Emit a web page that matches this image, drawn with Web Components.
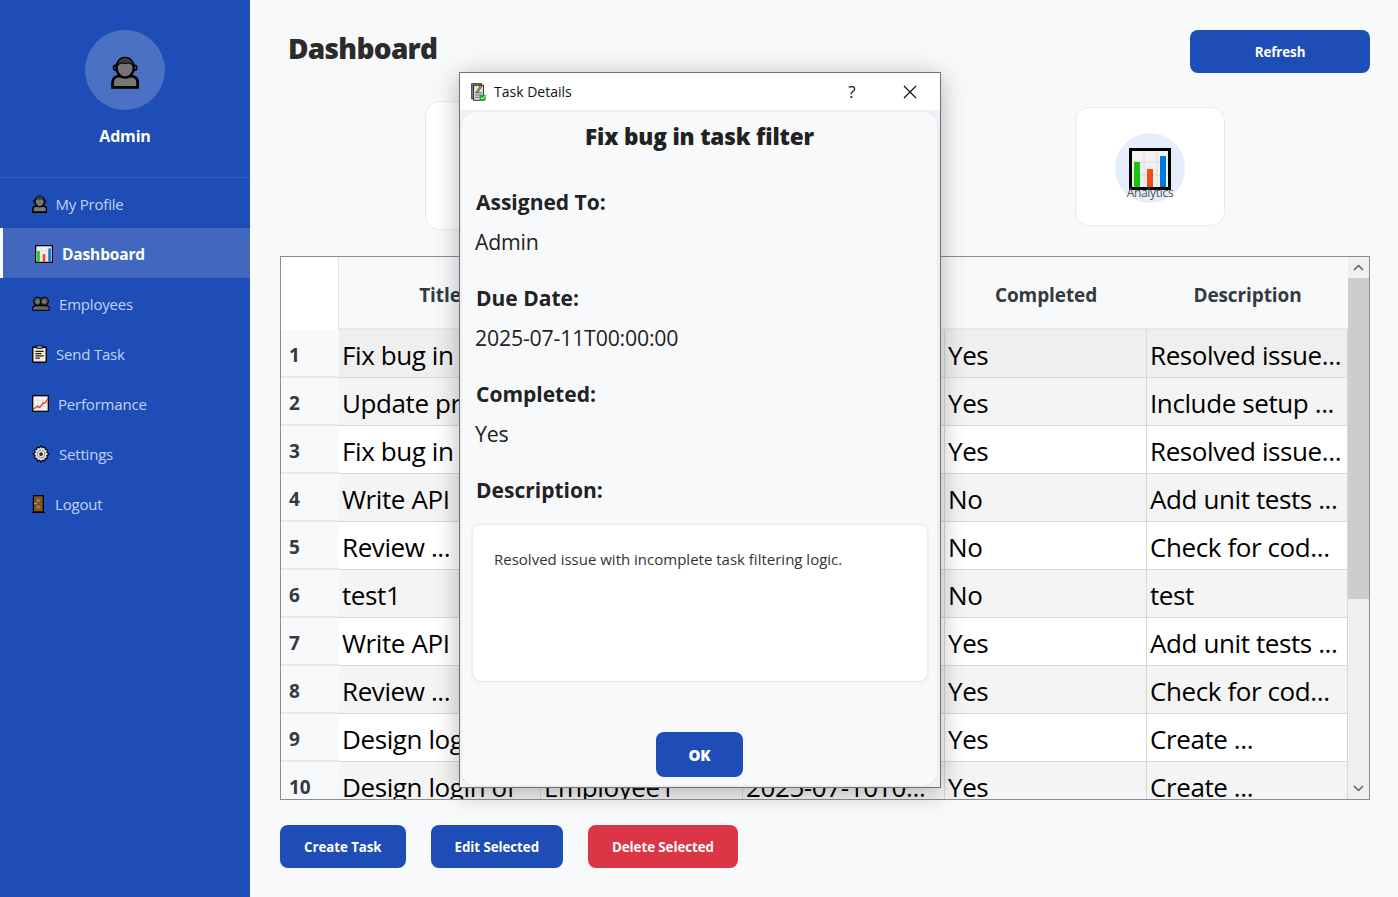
<!DOCTYPE html>
<html lang="en">
  <head>
    <meta charset="UTF-8" />
    <title>Dashboard</title>
    <style>
      html,
      body {
        margin: 0;
        height: 100%;
      }
      body {
        font-family: "Open Sans", "Noto Sans", sans-serif;
      }
    </style>
  </head>
  <body>
    <app-shell>
      <side-bar slot="side"></side-bar>

      <page-header slot="main">Dashboard</page-header>
      <stat-row slot="main"></stat-row>
      <task-table slot="main"></task-table>
      <action-bar slot="main"></action-bar>

      <task-dialog slot="over"></task-dialog>
    </app-shell>

    <script>
      // emoji style pictures: [viewBox width, viewBox height, markup]
      const ICONS = {
        person: [18, 21, `
          <path d="M1 20v-3c0-2.600 1.800-4.200 4.500-4.200h7c2.700 0 4.500 1.600 4.500 4.200v3z" fill="#777" stroke="#000" stroke-width="1.800"/>
          <ellipse cx="2.900" cy="7.500" rx="1.300" ry="1.600" fill="#666" stroke="#000"/>
          <ellipse cx="15.100" cy="7.500" rx="1.300" ry="1.600" fill="#666" stroke="#000"/>
          <ellipse cx="9" cy="7.500" rx="5.500" ry="6.300" fill="#757575" stroke="#000" stroke-width="1.500"/>
          <path d="M3.500 7C4 2.500 6.500 1 9 1s5 1.500 5.500 6C13 4.500 11 4 9 5 7 4 5 4.500 3.500 7z" fill="#3c3c3c" stroke="#000" stroke-width=".7"/>`],
        people: [24, 20, `
          <path d="M1 19v-2.500C1 14 3 12.800 6 12.800h12c3 0 5 1.200 5 3.700V19z" fill="#666" stroke="#000" stroke-width="1.500"/>
          <circle cx="7.500" cy="7" r="5.300" fill="#4a4a4a" stroke="#000" stroke-width="1.500"/>
          <circle cx="16.500" cy="7" r="5.300" fill="#4a4a4a" stroke="#000" stroke-width="1.500"/>
          <circle cx="7.500" cy="7.500" r="2.700" fill="#777"/>
          <circle cx="16.500" cy="7.500" r="2.700" fill="#777"/>`],
        task: [20, 24, `
          <rect x="1" y="3" width="18" height="20" rx="1" fill="#f3e8d2" stroke="#000" stroke-width="1.800"/>
          <rect x="6.500" y="1" width="7" height="3.500" fill="#999" stroke="#000"/>
          <path d="M4.500 8.500h11M4.500 11.500h8M4.500 14.500h11M4.500 17.500h6" stroke="#222" stroke-width="1.600"/>`],
        trend: [24, 24, `
          <rect x="1" y="1" width="22" height="22" fill="#f4f4f4" stroke="#000" stroke-width="1.800"/>
          <path d="M8 2v20M15.500 2v20M2 8h20M2 15.500h20" stroke="#d8d8d8"/>
          <path d="M2 20l5.500-4 3.500 1.500 5-6.500 2.500.5L22.500 5" fill="none" stroke="#f03a17" stroke-width="1.800"/>`],
        gear: [24, 24, `
          <path d="M12 1l1.800 2.600 3.100-1 .7 3.100 3.100.7-1 3.100L22.600 12l-2.900 2.400 1 3.100-3.100.7-.7 3.100-3.100-1L12 23l-1.800-2.700-3.100 1-.7-3.100-3.100-.7 1-3.100L1.400 12l2.900-2.400-1-3.100 3.100-.7.7-3.100 3.100 1z" fill="#dcdcdc" stroke="#000" stroke-width="1.400"/>
          <circle cx="12" cy="12" r="5" fill="#ededed" stroke="#777"/>
          <circle cx="12" cy="12" r="2.500" fill="#222"/>`],
        door: [20, 24, `
          <path d="M0 23h17" stroke="#000" stroke-width="1.800"/>
          <rect x="2" y="1" width="13" height="21.500" fill="#92602f" stroke="#000" stroke-width="1.800"/>
          <path d="M5 4.500h7v6H5zM5 13h7v6.500H5z" fill="#a5713c" stroke="#5a3716"/>
          <rect x="3.500" y="10.500" width="2.200" height="1.800" fill="#ffd24a"/>`],
        chart: [42, 42, `
          <rect x="1.500" y="1.500" width="39" height="39" fill="#f2f2f2" stroke="#000" stroke-width="3"/>
          <path d="M15 3v36M28 3v36M3 14h36M3 27h36" stroke="#dcdcdc"/>
          <rect x="5" y="14" width="6" height="25" fill="#16c60c"/>
          <rect x="18" y="21" width="6" height="18" fill="#f7491d"/>
          <rect x="31" y="8" width="6" height="31" fill="#0078d7"/>`],
        doc: [20, 24, `
          <rect x="1" y="1" width="13" height="20" fill="#9a9a9a" stroke="#222" stroke-width="1.300"/>
          <rect x="3.500" y="3" width="13" height="20" fill="#e6e6e6" stroke="#222" stroke-width="1.300"/>
          <path d="M5.500 13h9M5.500 16h9M5.500 19h6" stroke="#333"/>
          <path d="M7 12l5.500-9 2 1.200-5.500 9z" fill="#c9a227" stroke="#222" stroke-width=".8"/>
          <rect x="11.500" y="15.500" width="8" height="8" rx="1" fill="#2fa52f"/>
          <path d="M13.200 19.500l1.800 1.800 2.800-3.300" fill="none" stroke="#fff" stroke-width="1.300"/>`],
      };

      class UiIcon extends HTMLElement {
        constructor() {
          super();
          const size = Number(this.getAttribute("size") || 18);
          const [w, h, markup] = ICONS[this.getAttribute("name")];
          this.attachShadow({ mode: "open" }).innerHTML = `
            <style>
              :host { display: inline-flex; width: ${(size * w) / h}px; height: ${size}px; flex: none; }
              svg { width: 100%; height: 100%; display: block; }
            </style>
            <svg viewBox="0 0 ${w} ${h}">${markup}</svg>`;
        }
      }
      customElements.define("ui-icon", UiIcon);

      class UiButton extends HTMLElement {
        constructor() {
          super();
          this.attachShadow({ mode: "open" }).innerHTML = `
            <style>
              :host {
                display: inline-flex;
                align-items: center;
                justify-content: center;
                height: 43px;
                padding: 0 24px;
                box-sizing: border-box;
                border-radius: 8px;
                background: #1e4db7;
                color: #fff;
                font-size: 13.3px;
                font-weight: 700;
                letter-spacing: -0.05px;
              }
              :host([danger]) { background: #dc3545; }
            </style>
            <slot></slot>`;
        }
      }
      customElements.define("ui-button", UiButton);

      class AppShell extends HTMLElement {
        constructor() {
          super();
          this.attachShadow({ mode: "open" }).innerHTML = `
            <style>
              :host {
                display: flex;
                position: relative;
                height: 897px;
                overflow: hidden;
                background: #f8f9fb;
              }
              .main {
                flex: 1;
                min-width: 0;
                display: flex;
                flex-direction: column;
                padding: 30px 28px 0 30px;
              }
            </style>
            <slot name="side"></slot>
            <div class="main"><slot name="main"></slot></div>
            <slot name="over"></slot>`;
        }
      }
      customElements.define("app-shell", AppShell);

      class NavItem extends HTMLElement {
        constructor() {
          super();
          const icon = this.getAttribute("icon");
          const size = this.getAttribute("size") || 18;
          const gap = this.getAttribute("gap") || 9;
          this.attachShadow({ mode: "open" }).innerHTML = `
            <style>
              :host {
                display: flex;
                align-items: center;
                height: 50px;
                box-sizing: border-box;
                padding-left: 32px;
                padding-top: 1px;
                gap: ${gap}px;
                color: #c3d2f2;
                font-size: 15px;
                letter-spacing: -0.2px;
              }
              :host([active]) {
                border-left: 3px solid #fff;
                background: #4267bf;
                color: #fff;
                font-weight: 700;
                font-size: 15.5px;
                letter-spacing: -0.15px;
              }
            </style>
            <ui-icon name="${icon}" size="${size}"></ui-icon>
            <slot></slot>`;
        }
      }
      customElements.define("nav-item", NavItem);

      class SideBar extends HTMLElement {
        constructor() {
          super();
          this.attachShadow({ mode: "open" }).innerHTML = `
            <style>
              :host {
                display: block;
                flex: none;
                width: 250px;
                background: #1e4db7;
                color: #fff;
              }
              .profile {
                display: flex;
                flex-direction: column;
                align-items: center;
                height: 147px;
                padding-top: 30px;
                border-bottom: 1px solid #3560c0;
              }
              .avatar {
                display: flex;
                align-items: center;
                justify-content: center;
                width: 80px;
                height: 80px;
                box-sizing: border-box;
                padding-top: 4px;
                border-radius: 50%;
                background: #4b71c4;
              }
              .name {
                margin-top: 15px;
                font-size: 16px;
                font-weight: 700;
                letter-spacing: -0.2px;
              }
            </style>
            <div class="profile">
              <div class="avatar"><ui-icon name="person" size="33"></ui-icon></div>
              <div class="name">Admin</div>
            </div>
            <nav>
              <nav-item icon="person" gap="8">My Profile</nav-item>
              <nav-item icon="chart" active>Dashboard</nav-item>
              <nav-item icon="people" size="15">Employees</nav-item>
              <nav-item icon="task">Send Task</nav-item>
              <nav-item icon="trend" size="17">Performance</nav-item>
              <nav-item icon="gear">Settings</nav-item>
              <nav-item icon="door" gap="8">Logout</nav-item>
            </nav>`;
        }
      }
      customElements.define("side-bar", SideBar);

      class PageHeader extends HTMLElement {
        constructor() {
          super();
          this.attachShadow({ mode: "open" }).innerHTML = `
            <style>
              :host {
                display: flex;
                justify-content: space-between;
                align-items: flex-start;
              }
              h1 {
                margin: 0 0 0 8px;
                font-size: 28px;
                line-height: 36px;
                font-weight: 800;
                letter-spacing: -0.7px;
                color: #2b2b2b;
              }
              ui-button { width: 180px; }
            </style>
            <h1><slot></slot></h1>
            <ui-button>Refresh</ui-button>`;
        }
      }
      customElements.define("page-header", PageHeader);

      class StatCard extends HTMLElement {
        constructor() {
          super();
          this.attachShadow({ mode: "open" }).innerHTML = `
            <style>
              :host {
                display: flex;
                position: relative;
                align-items: center;
                justify-content: center;
                box-sizing: border-box;
                width: 150px;
                height: 119px;
                padding-top: 2px;
                background: #fff;
                border: 1px solid #e8eaee;
                border-radius: 14px;
              }
              .disc {
                display: flex;
                align-items: center;
                justify-content: center;
                width: 70px;
                height: 70px;
                box-sizing: border-box;
                padding-top: 3px;
                border-radius: 50%;
                background: #e6edfb;
              }
              .label {
                position: absolute;
                left: 0;
                right: 0;
                top: 76px;
                text-align: center;
                font-size: 12px;
                letter-spacing: -0.3px;
                color: #555;
              }
            </style>
            <div class="disc"><ui-icon name="chart" size="42"></ui-icon></div>
            <div class="label"><slot></slot></div>`;
        }
      }
      customElements.define("stat-card", StatCard);

      class StatRow extends HTMLElement {
        constructor() {
          super();
          this.attachShadow({ mode: "open" }).innerHTML = `
            <style>
              :host {
                display: flex;
                align-items: flex-start;
                justify-content: space-between;
                height: 183px;
                padding: 34px 145px 0 145px;
                box-sizing: border-box;
              }
              .first {
                width: 180px;
                height: 129px;
                margin-top: -6px;
                background: #fff;
                border: 1px solid #e8eaee;
                border-radius: 14px;
                box-sizing: border-box;
              }
            </style>
            <div class="first"></div>
            <stat-card>Analytics</stat-card>`;
        }
      }
      customElements.define("stat-row", StatRow);

      const ROWS = [
        ["Fix bug in ...", "Admin", "2025-07-11T0...", "Yes", "Resolved issue..."],
        ["Update project", "", "", "Yes", "Include setup ..."],
        ["Fix bug in ...", "", "", "Yes", "Resolved issue..."],
        ["Write API", "", "", "No", "Add unit tests ..."],
        ["Review ...", "", "", "No", "Check for cod..."],
        ["test1", "", "", "No", "test"],
        ["Write API", "", "", "Yes", "Add unit tests ..."],
        ["Review ...", "", "", "Yes", "Check for cod..."],
        ["Design login of", "", "", "Yes", "Create ..."],
        ["Design login of", "Employee1", "2025-07-10T0...", "Yes", "Create ..."],
      ];

      class TaskTable extends HTMLElement {
        constructor() {
          super();
          const cols = ["Title", "Assigned To", "Due Date", "Completed", "Description"];
          const head = cols.map((c) => `<div class="hc">${c}</div>`).join("");
          const body = ROWS.map((r, i) => {
            let tone = i % 2 == 1 ? "alt" : "";
            if (i == 0) tone = "sel";
            const cells = r.map((c) => `<div class="c ${tone}">${c}</div>`).join("");
            return `<div class="rh">${i + 1}</div>${cells}`;
          }).join("");
          this.attachShadow({ mode: "open" }).innerHTML = `
            <style>
              :host {
                display: flex;
                box-sizing: border-box;
                height: 544px;
                border: 1px solid #8a8d93;
                overflow: hidden;
              }
              .grid {
                flex: 1;
                min-width: 0;
                display: grid;
                grid-template-columns: 58px 202px 202px 202px 202px 1fr;
                grid-auto-rows: 48px;
                grid-template-rows: 73px;
                align-content: start;
              }
              .corner { background: #fff; border-right: 1px solid #e2e3e6; }
              .hc {
                display: flex;
                align-items: center;
                justify-content: center;
                padding-top: 4px;
                box-sizing: border-box;
                font-size: 19px;
                font-weight: 700;
                letter-spacing: -0.1px;
                color: #343a40;
                background: #f8f9fb;
                border-bottom: 2px solid #e8e9eb;
              }
              .rh {
                display: flex;
                align-items: center;
                padding: 3px 0 0 8px;
                box-sizing: border-box;
                font-size: 19px;
                font-weight: 700;
                color: #343a40;
                background: #f8f9fb;
                border-bottom: 2px solid #e8e9eb;
              }
              .c {
                display: flex;
                align-items: center;
                padding: 3px 0 0 3px;
                box-sizing: border-box;
                overflow: hidden;
                white-space: nowrap;
                font-size: 26px;
                letter-spacing: -0.4px;
                color: #000;
                background: #fff;
                border-right: 1px solid #d8d8d8;
                border-bottom: 1px solid #d8d8d8;
              }
              .c.alt { background: #f4f4f4; }
              .c.sel { background: #efefef; }
              .bar {
                flex: none;
                width: 21px;
                display: flex;
                flex-direction: column;
                background: #f0f0f0;
              }
              .arrow {
                display: flex;
                align-items: center;
                justify-content: center;
                height: 21px;
                flex: none;
                background: #f0f0f0;
              }
              .arrow svg { width: 11px; height: 7px; }
              .thumb { height: 321px; background: #cdcdcd; flex: none; }
              .space { flex: 1; }
            </style>
            <div class="grid">
              <div class="corner"></div>
              ${head}
              ${body}
            </div>
            <div class="bar">
              <div class="arrow"><svg viewBox="0 0 11 7"><path d="M1 6l4.500-4.500L10 6" fill="none" stroke="#606060" stroke-width="1.500"/></svg></div>
              <div class="thumb"></div>
              <div class="space"></div>
              <div class="arrow"><svg viewBox="0 0 11 7"><path d="M1 1l4.500 4.500L10 1" fill="none" stroke="#606060" stroke-width="1.500"/></svg></div>
            </div>`;
        }
      }
      customElements.define("task-table", TaskTable);

      class ActionBar extends HTMLElement {
        constructor() {
          super();
          this.attachShadow({ mode: "open" }).innerHTML = `
            <style>
              :host { display: flex; gap: 25px; margin-top: 25px; }
            </style>
            <ui-button>Create Task</ui-button>
            <ui-button>Edit Selected</ui-button>
            <ui-button danger>Delete Selected</ui-button>`;
        }
      }
      customElements.define("action-bar", ActionBar);

      class DetailField extends HTMLElement {
        constructor() {
          super();
          const label = this.getAttribute("label");
          this.attachShadow({ mode: "open" }).innerHTML = `
            <style>
              :host { display: block; padding-left: 13px; height: 96px; }
              :host([bare]) { height: 40px; }
              .label {
                height: 40px;
                line-height: 40px;
                padding-left: 1px;
                font-size: 21px;
                font-weight: 700;
                color: #222;
              }
              .value {
                height: 40px;
                line-height: 40px;
                font-size: 21.3px;
                letter-spacing: -0.2px;
                color: #222;
              }
            </style>
            <div class="label">${label}</div>
            <div class="value"><slot></slot></div>`;
        }
      }
      customElements.define("detail-field", DetailField);

      // the task window lies over the page
      class TaskDialog extends HTMLElement {
        constructor() {
          super();
          this.attachShadow({ mode: "open" }).innerHTML = `
            <style>
              :host {
                position: absolute;
                left: 459px;
                top: 72px;
                width: 482px;
                height: 716px;
                box-sizing: border-box;
                display: flex;
                flex-direction: column;
                background: #f0f1f4;
                border: 1px solid #6f7074;
                box-shadow: 0 4px 24px rgba(0, 0, 0, 0.28);
              }
              .titlebar {
                display: flex;
                align-items: center;
                flex: none;
                height: 37px;
                background: #fff;
                padding-left: 11px;
                font-size: 14px;
                color: #111;
              }
              .titlebar span { margin-left: 8px; flex: 1; }
              .help { width: 12px; text-align: center; font-size: 17px; margin-right: 45px; }
              .close { width: 14px; height: 14px; margin-right: 23px; }
              .body {
                flex: 1;
                display: flex;
                flex-direction: column;
                margin-right: 1px;
                background: #f8f9fb;
                border: 2px solid #eceef2;
                border-radius: 16px;
                box-sizing: border-box;
                min-height: 0;
              }
              h2 {
                margin: 10px 0 30px;
                height: 30px;
                line-height: 30px;
                text-align: center;
                font-size: 22.5px;
                font-weight: 800;
                letter-spacing: -0.15px;
                color: #222;
              }
              .desc {
                margin: 13px 8px 0 9px;
                height: 160px;
                padding: 24px 21px;
                box-sizing: border-box;
                background: #fff;
                border: 2px solid #eceef2;
                border-radius: 10px;
                font-size: 15px;
                color: #333;
              }
              .foot { display: flex; justify-content: center; margin-top: 49px; }
              .foot ui-button {
                width: 87px;
                height: 45px;
                font-size: 15px;
                font-weight: 800;
              }
            </style>
            <div class="titlebar">
              <ui-icon name="doc" size="18"></ui-icon>
              <span>Task Details</span>
              <div class="help">?</div>
              <svg class="close" viewBox="0 0 14 14"><path d="M1 1l12 12M13 1L1 13" stroke="#111" stroke-width="1.200"/></svg>
            </div>
            <div class="body">
              <h2>Fix bug in task filter</h2>
              <detail-field label="Assigned To:">Admin</detail-field>
              <detail-field label="Due Date:">2025-07-11T00:00:00</detail-field>
              <detail-field label="Completed:">Yes</detail-field>
              <detail-field label="Description:" bare></detail-field>
              <div class="desc">Resolved issue with incomplete task filtering logic.</div>
              <div class="foot"><ui-button>OK</ui-button></div>
            </div>`;
        }
      }
      customElements.define("task-dialog", TaskDialog);
    </script>
  </body>
</html>
